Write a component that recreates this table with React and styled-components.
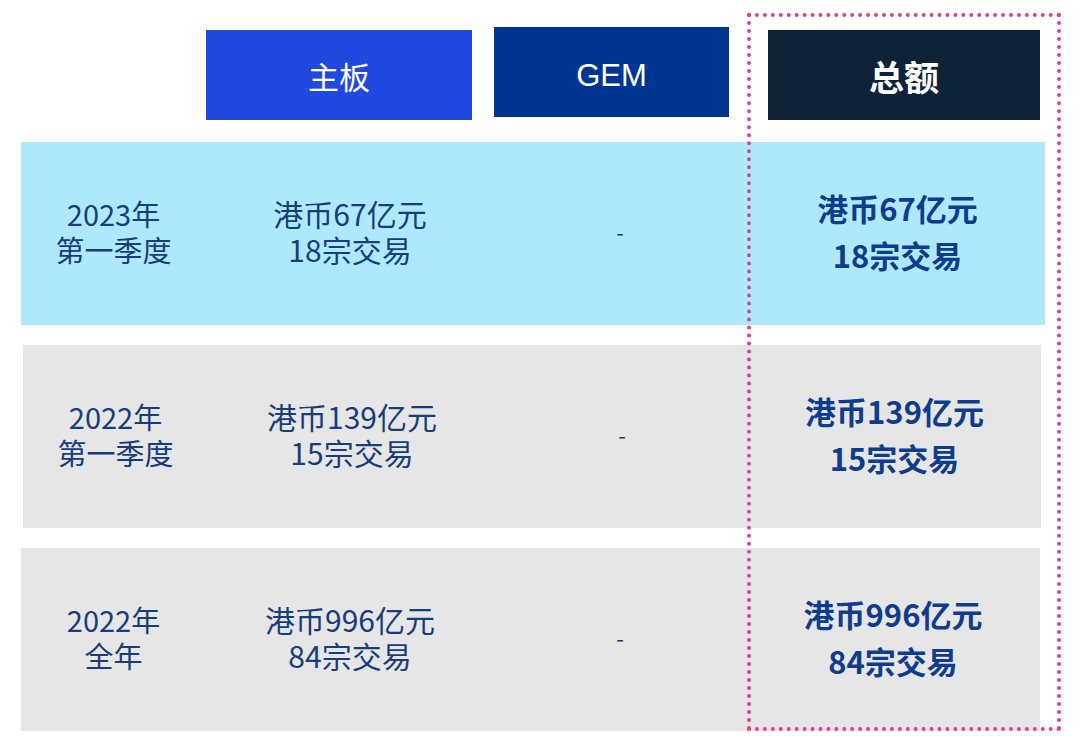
import styled, { createGlobalStyle } from "styled-components";

const GlobalStyle = createGlobalStyle`
  body {
    margin: 0;
    background: #ffffff;
    font-family: "Noto Sans CJK SC", "Noto Sans", sans-serif;
  }
`;

const Page = styled.div`
  position: relative;
  width: 1080px;
  height: 749px;
  padding-top: 27px;
  box-sizing: border-box;
  overflow: hidden;
`;

const HeaderRow = styled.div`
  display: flex;
  align-items: flex-start;
  margin-left: 206px;
`;

const HeaderCell = styled.div`
  flex: none;
  width: ${(p) => p.$width}px;
  height: 90px;
  box-sizing: border-box;
  padding-top: ${(p) => p.$nudge || 0}px;
  margin-top: ${(p) => p.$top || 0}px;
  margin-left: ${(p) => p.$left || 0}px;
  background: ${(p) => p.$bg};
  color: #ffffff;
  display: flex;
  align-items: center;
  justify-content: center;
  font-family: "Liberation Sans", "Noto Sans CJK SC", sans-serif;
  font-size: ${(p) => (p.$bold ? 35 : 31)}px;
  font-weight: ${(p) => (p.$bold ? 700 : 400)};
`;

const Body = styled.div`
  display: flex;
  flex-direction: column;
  gap: 20px;
  margin-top: 22px;
`;

const Row = styled.div`
  display: grid;
  grid-template-columns: 185px 288px 252px 1fr;
  align-items: center;
  height: 183px;
  padding-bottom: 6px;
  box-sizing: border-box;
  margin-left: ${(p) => p.$left}px;
  width: ${(p) => p.$width}px;
  background: ${(p) => (p.$highlight ? "#aee9fb" : "#e6e6e6")};
`;

const Cell = styled.div`
  text-align: center;
  color: #173d7a;
  font-size: 29px;
  line-height: 36px;
  white-space: nowrap;
`;

const Amount = styled(Cell)`
  font-size: 30px;
`;

const Dash = styled(Cell)`
  font-size: 22px;
  color: #243a5e;
`;

const Total = styled(Cell)`
  font-weight: 700;
  font-size: 31px;
  line-height: 47px;
  color: #0f3c8c;
  padding-left: ${(p) => p.$shift || 0}px;
`;

const Highlight = styled.div`
  position: absolute;
  left: 747px;
  top: 13px;
  width: 314px;
  height: 718px;
  box-sizing: border-box;
  border: 4px dotted #e2408d;
  pointer-events: none;
`;

const rows = [
  {
    period: ["2023年", "第一季度"],
    main: ["港币67亿元", "18宗交易"],
    highlight: true,
    left: 21,
    width: 1024,
  },
  {
    period: ["2022年", "第一季度"],
    main: ["港币139亿元", "15宗交易"],
    left: 23,
    width: 1018,
  },
  {
    period: ["2022年", "全年"],
    main: ["港币996亿元", "84宗交易"],
    left: 21,
    width: 1019,
  },
];

const App = () => {
  return (
    <>
      <GlobalStyle />
      <Page>
        <HeaderRow>
          <HeaderCell $bg="#2149e0" $width={266} $top={3}>主板</HeaderCell>
          <HeaderCell $bg="#003592" $width={235} $left={22} $nudge={8}>GEM</HeaderCell>
          <HeaderCell $bg="#0e2238" $width={272} $top={3} $left={39} $bold>总额</HeaderCell>
        </HeaderRow>
        <Body>
          {rows.map((r) => (
            <Row key={r.period.join()} $highlight={r.highlight} $left={r.left} $width={r.width}>
              <Cell>
                {r.period[0]}
                <br />
                {r.period[1]}
              </Cell>
              <Amount>
                {r.main[0]}
                <br />
                {r.main[1]}
              </Amount>
              <Dash>-</Dash>
              <Total $shift={r.highlight ? 4 : 0}>
                {r.main[0]}
                <br />
                {r.main[1]}
              </Total>
            </Row>
          ))}
        </Body>
        <Highlight />
      </Page>
    </>
  );
};

export default App;
